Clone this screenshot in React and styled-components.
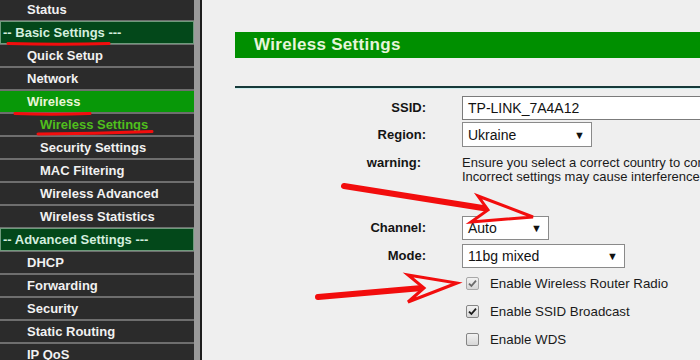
import React from 'react'
import styled, { createGlobalStyle, css } from 'styled-components'

const GlobalStyle = createGlobalStyle`
  html, body {
    margin: 0;
    padding: 0;
    background: #efefef;
  }
  body {
    font-family: "Liberation Sans", Arial, sans-serif;
  }
`

const menu = [
  { text: 'Status' },
  { text: '-- Basic Settings ---', kind: 'head' },
  { text: 'Quick Setup' },
  { text: 'Network' },
  { text: 'Wireless', kind: 'active' },
  { text: 'Wireless Settings', kind: 'current' },
  { text: 'Security Settings', kind: 'sub' },
  { text: 'MAC Filtering', kind: 'sub' },
  { text: 'Wireless Advanced', kind: 'sub' },
  { text: 'Wireless Statistics', kind: 'sub' },
  { text: '-- Advanced Settings ---', kind: 'head' },
  { text: 'DHCP' },
  { text: 'Forwarding' },
  { text: 'Security' },
  { text: 'Static Routing' },
  { text: 'IP QoS' }
]

const checks = [
  { text: 'Enable Wireless Router Radio', checked: true, dim: true },
  { text: 'Enable SSID Broadcast', checked: true },
  { text: 'Enable WDS', checked: false }
]

const Page = styled.div`
  position: relative;
  display: flex;
  width: 700px;
  height: 360px;
  overflow: hidden;
  background: #efefef;
`

const SideFrame = styled.div`
  flex: none;
  width: 194px;
  padding-right: 6px;
  background: #9a9a9a;
  border-right: 2px solid #1e1e1e;
`

const Menu = styled.nav`
  display: flex;
  flex-direction: column;
  gap: 2px;
  margin-top: -1px;
  background: #6e6e6e;
`

const MenuItem = styled.div`
  height: 21px;
  line-height: 21px;
  padding-left: 27px;
  background: #2b2b2b;
  color: #f1f1f1;
  font-size: 13px;
  font-weight: bold;
  white-space: nowrap;

  ${p =>
    p.$kind === 'head' &&
    css`
      height: 23px;
      margin: -1px 0;
      padding-left: 2px;
      box-sizing: border-box;
      border: 1px solid #6f9a7c;
      background: #03481a;
      color: #d4eedf;
    `}

  ${p =>
    p.$kind === 'active' &&
    css`
      background: #089808;
      color: #e8f6d6;
    `}

  ${p =>
    (p.$kind === 'sub' || p.$kind === 'current') &&
    css`
      padding-left: 40px;
    `}

  ${p =>
    p.$kind === 'current' &&
    css`
      color: #4fbf1c;
    `}
`

const Content = styled.main`
  flex: 1;
  padding: 32px 0 0 33px;
  min-width: 0;
`

const TitleBar = styled.h1`
  margin: 0;
  height: 26px;
  line-height: 26px;
  padding-left: 19px;
  background: #008f00;
  color: #e6f5da;
  font-size: 17px;
  font-weight: bold;
  letter-spacing: 0.3px;
`

const Rule = styled.div`
  margin-top: 28px;
  border-top: 2px solid #173a3a;
  box-shadow: 0 1px 0 #cdeeee;
`

const Form = styled.div`
  display: flex;
  flex-direction: column;
`

const Row = styled.div`
  display: flex;
  align-items: ${p => (p.$top ? 'flex-start' : 'center')};
  height: ${p => p.$h}px;
  margin-top: ${p => p.$mt || 0}px;
`

const Label = styled.div`
  flex: none;
  width: ${p => 191 - (p.$inset || 0)}px;
  padding-right: ${p => p.$inset || 0}px;
  text-align: right;
  color: #141414;
  font-size: 13px;
  font-weight: bold;
  line-height: 14px;
`

const Value = styled.div`
  margin-left: 36px;
  display: flex;
  align-items: center;
`

const TextBox = styled.div`
  box-sizing: border-box;
  width: 260px;
  height: 24px;
  line-height: 22px;
  padding-left: 5px;
  border: 1px solid #7b7b7b;
  background: #fff;
  color: #121212;
  font-size: 14px;
`

const Select = styled.div`
  box-sizing: border-box;
  display: flex;
  align-items: center;
  justify-content: space-between;
  width: ${p => p.$w}px;
  height: ${p => p.$h || 24}px;
  padding: 0 6px 0 5px;
  border: 1px solid #8a8a8a;
  background: #fff;
  color: #121212;
  font-size: 14px;
`

const Caret = styled.span`
  font-size: 11px;
  color: #111;
`

const Warning = styled.div`
  color: #1a1a1a;
  font-size: 13px;
  line-height: 14px;
  white-space: nowrap;
`

const CheckRow = styled.label`
  display: flex;
  align-items: center;
  margin-left: 4px;
  color: #1a1a1a;
  font-size: 13.3px;
`

const Box = styled.span`
  box-sizing: border-box;
  display: flex;
  align-items: center;
  justify-content: center;
  width: 13px;
  height: 13px;
  margin-right: 11px;
  border: 1px solid ${p => (p.$dim ? '#a8a8a8' : '#858585')};
  border-radius: 2px;
  background: linear-gradient(#f2f2f2, #d6d6d6);
`

const Overlay = styled.svg`
  position: absolute;
  left: 0;
  top: 0;
  pointer-events: none;
`

const Check = ({ dim }) => (
  <svg width="9" height="9" viewBox="0 0 9 9">
    <path
      d="M1 4.6 L3.4 7 L8 1.6"
      fill="none"
      stroke={dim ? '#6a6a6a' : '#1c1c1c'}
      strokeWidth="1.8"
    />
  </svg>
)

const Annotations = () => (
  <Overlay width="700" height="360" viewBox="0 0 700 360">
    <g fill="none" stroke="#f20d0d" strokeLinecap="round">
      <path d="M8 43.5 Q60 45 109 43.5" strokeWidth="3" />
      <path d="M15 113.5 Q52 115 90 113.5" strokeWidth="3" />
      <path d="M38 134 Q96 133.5 152 131.5" strokeWidth="3" />
      <path d="M344 186 L489 209" strokeWidth="6" />
      <path d="M318 297 L422 288" strokeWidth="6" />
    </g>
    <g fill="#f0f0f0" stroke="#f20d0d" strokeWidth="3" strokeLinejoin="miter">
      <polygon points="478,196 533,217 471,222 488,210" />
      <polygon points="408,275 457,283 408,302 424,288" />
    </g>
  </Overlay>
)

const App = () => {
  return (
    <Page>
      <GlobalStyle />
      <SideFrame>
        <Menu>
          {menu.map(item => (
            <MenuItem key={item.text} $kind={item.kind}>
              {item.text}
            </MenuItem>
          ))}
        </Menu>
      </SideFrame>

      <Content>
        <TitleBar>Wireless Settings</TitleBar>
        <Rule />
        <Form>
          <Row $h={24} $mt={8}>
            <Label>SSID:</Label>
            <Value>
              <TextBox>TP-LINK_7A4A12</TextBox>
            </Value>
          </Row>
          <Row $h={25} $mt={2}>
            <Label>Region:</Label>
            <Value>
              <Select $w={130} $h={25}>
                Ukraine <Caret>▼</Caret>
              </Select>
            </Value>
          </Row>
          <Row $h={30} $mt={9} $top>
            <Label $inset={5}>warning:</Label>
            <Value>
              <Warning>
                Ensure you select a correct country to conform local law.
                <br />
                Incorrect settings may cause interference.
              </Warning>
            </Value>
          </Row>
          <Row $h={24} $mt={30}>
            <Label>Channel:</Label>
            <Value>
              <Select $w={87}>
                Auto <Caret>▼</Caret>
              </Select>
            </Value>
          </Row>
          <Row $h={24} $mt={4}>
            <Label>Mode:</Label>
            <Value>
              <Select $w={163}>
                11bg mixed <Caret>▼</Caret>
              </Select>
            </Value>
          </Row>
          {checks.map((c, i) => (
            <Row key={c.text} $h={28} $mt={i === 0 ? 1 : 0}>
              <Label />
              <Value>
                <CheckRow>
                  <Box $dim={c.dim}>{c.checked && <Check dim={c.dim} />}</Box>
                  {c.text}
                </CheckRow>
              </Value>
            </Row>
          ))}
        </Form>
      </Content>

      <Annotations />
    </Page>
  )
}

export default App
